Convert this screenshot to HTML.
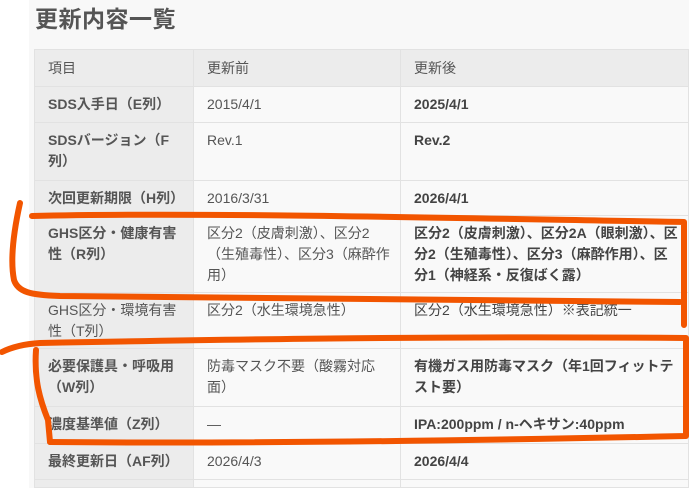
<!DOCTYPE html>
<html><head><meta charset="utf-8"><style>
*{margin:0;padding:0;box-sizing:border-box}
body{width:689px;height:493px;overflow:hidden;background:#fff;font-family:"Liberation Sans","Noto Sans CJK JP",sans-serif;position:relative}
.panel{position:absolute;left:29px;top:0;width:660px;height:488px;background:#f8f8f8}
h1{position:absolute;left:35px;top:0px;font-size:23px;font-weight:bold;color:#555;letter-spacing:0.5px}
table{position:absolute;left:34px;top:49px;width:655px;border-collapse:collapse;table-layout:fixed;font-size:14px;color:#555;line-height:21px}
td,th{border:1px solid #e2e2e2;padding:7px 10px 6px 13px;vertical-align:top;text-align:left;overflow:hidden}
th{background:#ececec;font-weight:normal;vertical-align:middle}
td.k{background:#ececec;font-weight:bold}
td.b{background:#f9f9f9}
td.a{background:#f9f9f9;font-weight:bold;color:#444}
svg{position:absolute;left:0;top:0}
</style></head><body>
<div class="panel"></div>
<h1>更新内容一覧</h1>
<table>
<colgroup><col style="width:159px"><col style="width:207px"><col></colgroup>
<tr style="height:37px"><th>項目</th><th>更新前</th><th>更新後</th></tr>
<tr style="height:36px"><td class="k">SDS入手日（E列）</td><td class="b">2015/4/1</td><td class="a">2025/4/1</td></tr>
<tr style="height:58px"><td class="k">SDSバージョン（F列）</td><td class="b">Rev.1</td><td class="a">Rev.2</td></tr>
<tr style="height:35px"><td class="k">次回更新期限（H列）</td><td class="b">2016/3/31</td><td class="a">2026/4/1</td></tr>
<tr style="height:77px"><td class="k">GHS区分・健康有害性（R列）</td><td class="b">区分2（皮膚刺激）、区分2（生殖毒性）、区分3（麻酔作用）</td><td class="a">区分2（皮膚刺激）、区分2A（眼刺激）、区分2（生殖毒性）、区分3（麻酔作用）、区分1（神経系・反復ばく露）</td></tr>
<tr style="height:56px"><td class="k" style="font-weight:normal">GHS区分・環境有害性（T列）</td><td class="b">区分2（水生環境急性）</td><td class="a" style="font-weight:normal">区分2（水生環境急性）※表記統一</td></tr>
<tr style="height:58px"><td class="k">必要保護具・呼吸用（W列）</td><td class="b">防毒マスク不要（酸霧対応面）</td><td class="a">有機ガス用防毒マスク（年1回フィットテスト要）</td></tr>
<tr style="height:37px"><td class="k">濃度基準値（Z列）</td><td class="b">—</td><td class="a">IPA:200ppm / n-ヘキサン:40ppm</td></tr>
<tr style="height:36px"><td class="k">最終更新日（AF列）</td><td class="b">2026/4/3</td><td class="a">2026/4/4</td></tr>
<tr style="height:8px"><td class="k" style="padding:0"></td><td class="b" style="padding:0"></td><td class="a" style="padding:0"></td></tr>
</table>
<svg width="689" height="493" fill="none" stroke="#f25500" stroke-width="6" stroke-linecap="round" stroke-linejoin="round">
<path d="M32 216 C200 212 450 218 684 222 L684 325"/>
<path d="M20 203 C14 230 10 260 14 280 C18 292 30 295 60 296 C250 298 450 300 680 302"/>
<path d="M2 352 C12 347 25 344 40 343 C250 339 450 336 686 338 L686 436 C500 440 250 444 50 442"/>
<path d="M36 350 C34 380 40 400 48 420 L50 442"/>
</svg>
</body></html>
